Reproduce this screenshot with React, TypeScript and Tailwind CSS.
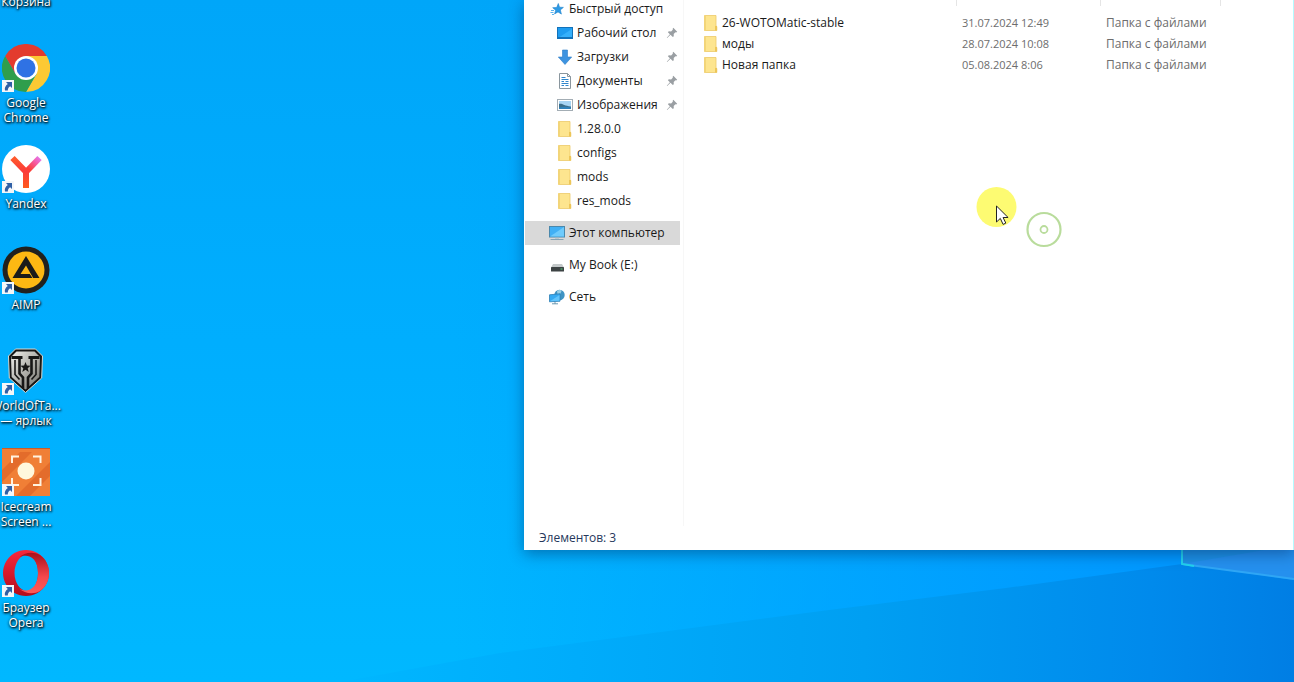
import type { ReactNode } from 'react'

type NavIcon = 'star' | 'desktop' | 'download' | 'document' | 'picture' | 'folder' | 'pc' | 'drive' | 'network'

type NavItem = { label: string; icon: NavIcon; pinned?: boolean }

const QUICK_ACCESS: NavItem[] = [
  { label: 'Рабочий стол', icon: 'desktop', pinned: true },
  { label: 'Загрузки', icon: 'download', pinned: true },
  { label: 'Документы', icon: 'document', pinned: true },
  { label: 'Изображения', icon: 'picture', pinned: true },
  { label: '1.28.0.0', icon: 'folder' },
  { label: 'configs', icon: 'folder' },
  { label: 'mods', icon: 'folder' },
  { label: 'res_mods', icon: 'folder' },
]

const FILES = [
  { name: '26-WOTOMatic-stable', date: '31.07.2024 12:49', type: 'Папка с файлами' },
  { name: 'моды', date: '28.07.2024 10:08', type: 'Папка с файлами' },
  { name: 'Новая папка', date: '05.08.2024 8:06', type: 'Папка с файлами' },
]

// ---------- Icons ----------

function Folder() {
  return (
    <svg viewBox="0 0 16 16" className="h-4 w-4 shrink-0" aria-hidden="true">
      <path d="M1.500 .5h11.500V11l.8.5v4H1.500z" fill="#fde58f" stroke="#ecc968" strokeWidth=".8" />
      <path d="M1.500 .5H3v15H1.500z" fill="#f3d678" />
      <path d="M12 11h2v4.500h-2z" fill="#edc659" />
    </svg>
  )
}

function NavGlyph({ icon }: { icon: NavIcon }) {
  if (icon === 'folder') return <Folder />
  return (
    <svg viewBox="0 0 16 16" className="h-4 w-4 shrink-0" aria-hidden="true">
      {icon === 'star' && (
        <>
          <path d="M9.300 2.500l1.200 3.700 3.900.2-3.100 2.500 1.100 4.200-3.400-2.200-3.400 2 1.100-3.700-3-2.500 4-.2z" fill="#2e9be6" stroke="#1b7fc9" strokeWidth=".6" />
          <path d="M2 9.500h3M1.500 11.500h3M3 13.500h2" stroke="#5cb4ee" />
        </>
      )}
      {icon === 'desktop' && (
        <>
          <rect x=".5" y="2.500" width="15" height="11" fill="#1e9cf0" stroke="#1272ba" />
          <path d="M1 13L15 4v9z" fill="#35b0fb" />
          <path d="M1 12.500h14" stroke="#1272ba" />
        </>
      )}
      {icon === 'download' && (
        <path d="M5.500 1h5v7h4.200L8 15.500 1.300 8h4.200z" fill="#3d93e0" stroke="#2d7dc8" strokeWidth=".6" />
      )}
      {icon === 'document' && (
        <>
          <path d="M2.500.5h8l3 3v12h-11z" fill="#fff" stroke="#8a969e" />
          <path d="M10.500.5v3h3" fill="none" stroke="#8a969e" />
          <path d="M4.500 4.500h4M4.500 6.500h7M4.500 8.500h2.500M8.500 8.500h3M4.500 10.500h7M4.500 12.500h2.500M8.500 12.500h3" stroke="#2f86cc" />
        </>
      )}
      {icon === 'picture' && (
        <>
          <rect x=".5" y="2.500" width="15" height="11" fill="#fff" stroke="#a3adb4" />
          <rect x="2" y="4" width="12" height="8" fill="#a8d5f4" />
          <path d="M2 7c3-1 5 2 12 2.500V12H2z" fill="#3c6f8b" />
          <path d="M2 10.500c4-1 8-.8 12 0V12H2z" fill="#2f82bb" />
        </>
      )}
      {icon === 'pc' && (
        <>
          <rect x=".5" y="1.500" width="15" height="10.500" fill="#41b0f5" stroke="#4a88ac" />
          <path d="M1 11.500L15 2v9.500z" fill="#6fcbfc" />
          <path d="M6 12.500h4v1H6z" fill="#9fb6c2" />
          <path d="M1.500 14.500h13" stroke="#86a3b3" />
        </>
      )}
      {icon === 'drive' && (
        <>
          <path d="M4 7h9l2 3.500H2z" fill="#c4c9ca" />
          <rect x="2" y="10" width="13" height="4.500" rx=".6" fill="#3d4344" />
          <rect x="11.500" y="11.500" width="2" height="1" fill="#55d07b" />
        </>
      )}
      {icon === 'network' && (
        <>
          <circle cx="10.500" cy="6" r="5.200" fill="#3f94c4" />
          <path d="M8 2c2-1.500 4-1 4.500 0l-1 2.500-3 1z" fill="#9bcfe6" />
          <path d="M.5 5.800l10.500-1v7.400l-10.500.6z" fill="#35aaf2" stroke="#2f7fb4" strokeWidth=".8" />
          <path d="M1 12.300L10.500 6v5.800z" fill="#62c4fb" />
          <path d="M3 14.800h6M6 13v2" stroke="#6d9ab3" />
        </>
      )}
    </svg>
  )
}

function Pin() {
  return (
    <svg viewBox="0 0 12 12" className="h-3 w-3 shrink-0" aria-hidden="true">
      <path d="M7.300.8l3.900 3.900-1 .7-.8-.1-1.700 1.700.1 2.200-1 .9-2.300-2.300L1.200 11l-.4-.3 3.100-3.500-2-2 .9-.9 2.300.1 1.700-1.700-.1-.9z" fill="#9a9fa3" />
    </svg>
  )
}

function ShortcutArrow() {
  return (
    <svg viewBox="0 0 12 12" className="absolute bottom-0 left-0 h-3 w-3" aria-hidden="true">
      <rect width="12" height="12" fill="#f4f6f8" />
      <path d="M4 2h6v6L8.200 6.200C6.500 7.200 5.800 8.500 5.800 10.500H3C2.300 8 3.500 5.500 5.800 3.900z" fill="#2f5fa5" />
    </svg>
  )
}

function ChromeIcon() {
  return (
    <svg viewBox="0 0 48 48" className="h-12 w-12">
      <path d="M24 12h20.800A24 24 0 0 1 24 48l10.400-18z" fill="#fcc934" />
      <path d="M3.200 12L13.600 30 24 36l10.400-6L24 48A24 24 0 0 1 3.200 12z" fill="#2f9e4c" />
      <path d="M3.200 12A24 24 0 0 1 44.800 12H24L13.600 30z" fill="#e33b2e" />
      <circle cx="24" cy="24" r="12" fill="#fff" />
      <circle cx="24" cy="24" r="9.500" fill="#2f72e4" />
    </svg>
  )
}

function YandexIcon() {
  return (
    <svg viewBox="0 0 48 48" className="h-12 w-12">
      <defs>
        <linearGradient id="ya-arm" gradientUnits="userSpaceOnUse" x1="24" y1="27" x2="38" y2="12">
          <stop offset="0.200" stopColor="#fb3d35" />
          <stop offset="0.700" stopColor="#f45fb0" />
          <stop offset="1" stopColor="#e07af0" />
        </linearGradient>
        <linearGradient id="ya-stem" x1="0" y1="0" x2="0" y2="1">
          <stop offset="0" stopColor="#ff5a2c" />
          <stop offset="0.450" stopColor="#fb3a3a" />
          <stop offset="1" stopColor="#ff5a1c" />
        </linearGradient>
      </defs>
      <circle cx="24" cy="24" r="24" fill="#fff" />
      <path d="M24 27L37.500 13" stroke="url(#ya-arm)" strokeWidth="6" />
      <path d="M10.500 13L24 27v16" fill="none" stroke="url(#ya-stem)" strokeWidth="6" />
    </svg>
  )
}

function AimpIcon() {
  return (
    <svg viewBox="0 0 48 48" className="h-12 w-12">
      <circle cx="24" cy="24" r="23.500" fill="#20211f" />
      <circle cx="24" cy="24" r="18.500" fill="#fdb813" />
      <path d="M24 10L37.500 32h-6.300L24 19.500 18.500 28h9.300l2.600 4H10.500z" fill="#1c1c1a" />
    </svg>
  )
}

function TanksIcon() {
  return (
    <svg viewBox="0 0 48 48" className="h-12 w-12">
      <defs>
        <linearGradient id="wot-steel" x1="0" y1="0" x2="1" y2="1">
          <stop offset="0" stopColor="#f0f0ec" />
          <stop offset="0.500" stopColor="#b2b2ac" />
          <stop offset="1" stopColor="#73736d" />
        </linearGradient>
      </defs>
      <path d="M13.500 2h20l7 7-.8 22L23.500 45.500 7.300 31 6.500 9z" fill="#171716" stroke="#d8d8d2" strokeWidth="1" />
      <path d="M14.500 4.500h18l5.500 5.500-.7 20L23.500 42.500 9.700 30 9 10z" fill="url(#wot-steel)" />
      {/* Twin T bars */}
      <path d="M9.500 10.500h11M26.500 10.500h11" stroke="#171716" strokeWidth="3" />
      <path d="M17.500 11v15.500l3.500 4V41M29.500 11v15.500l-3.500 4V41" fill="none" stroke="#171716" strokeWidth="2.600" />
      <path d="M13 13v14.500l4.500 5" fill="none" stroke="#171716" strokeWidth="1.600" />
      <path d="M34 13v14.500l-4.500 5" fill="none" stroke="#171716" strokeWidth="1.600" />
      <path d="M23.500 15l1.400 3.600 3.600.2-2.800 2.400 1 3.700-3.200-2.100-3.200 2.100 1-3.700-2.800-2.400 3.600-.2z" fill="#171716" />
    </svg>
  )
}

function IcecreamIcon() {
  return (
    <svg viewBox="0 0 48 48" className="h-12 w-12">
      <rect width="48" height="48" fill="#f07f36" />
      <path d="M0 22L18 4h12L0 34zM14 48L48 14v14L28 48z" fill="#e36c2b" />
      <path d="M0 0h48" stroke="#c95d28" strokeWidth="2" />
      <path d="M10 15V8.500h7M31 8.500h7.500V15M38.500 30v7H31M17 37h-7v-7" fill="none" stroke="#fff3df" strokeWidth="2" />
      <circle cx="24" cy="23" r="8.500" fill="#fff8dc" />
    </svg>
  )
}

function OperaIcon() {
  return (
    <svg viewBox="0 0 48 48" className="h-12 w-12">
      <defs>
        <linearGradient id="op-left" x1="0" y1="0" x2="0" y2="1">
          <stop offset="0" stopColor="#f8283c" />
          <stop offset="1" stopColor="#b30c1b" />
        </linearGradient>
        <linearGradient id="op-right" x1="0" y1="0" x2="0" y2="1">
          <stop offset="0" stopColor="#a80f1c" />
          <stop offset="0.600" stopColor="#f5484c" />
          <stop offset="1" stopColor="#ff5a58" />
        </linearGradient>
      </defs>
      <path fillRule="evenodd" d="M24 1a23 23 0 1 0 .01 0zM25 5.500c6.500 0 11 8 11 18.500s-4.500 18-11 18-12.500-8-12.500-18S18.500 5.500 25 5.500z" fill="url(#op-left)" />
      <path d="M17 8.500C22 3.500 31 2 38 6c6 4 9 11 9 18s-3 14-9 18c-6 3.500-15 3-21-2.500 8 5 19 .5 19-15.500S25 4 17 8.500z" fill="url(#op-right)" />
    </svg>
  )
}

// ---------- Desktop ----------

const SHORTCUTS: { lines: string[]; icon: ReactNode }[] = [
  { lines: ['Корзина'], icon: null },
  { lines: ['Google', 'Chrome'], icon: <ChromeIcon /> },
  { lines: ['Yandex'], icon: <YandexIcon /> },
  { lines: ['AIMP'], icon: <AimpIcon /> },
  { lines: ['WorldOfTa...', '— ярлык'], icon: <TanksIcon /> },
  { lines: ['Icecream', 'Screen ...'], icon: <IcecreamIcon /> },
  { lines: ['Браузер', 'Opera'], icon: <OperaIcon /> },
]

function Wallpaper() {
  return (
    <svg viewBox="0 0 1294 682" preserveAspectRatio="none" className="absolute inset-0 h-full w-full" aria-hidden="true">
      <defs>
        <linearGradient id="sky" x1="0" y1="0" x2="0" y2="1">
          <stop offset="0" stopColor="#00a6f9" />
          <stop offset="0.500" stopColor="#00aefe" />
          <stop offset="1" stopColor="#00b8ff" />
        </linearGradient>
        <linearGradient id="shade" x1="0" y1="0" x2="1" y2="0">
          <stop offset="0.350" stopColor="#0098ff" stopOpacity="0" />
          <stop offset="0.900" stopColor="#0098ff" />
        </linearGradient>
        <linearGradient id="floor" gradientUnits="userSpaceOnUse" x1="340" y1="640" x2="1294" y2="660">
          <stop offset="0" stopColor="#00b7ff" />
          <stop offset="0.250" stopColor="#00acfb" />
          <stop offset="0.550" stopColor="#009ff2" />
          <stop offset="0.850" stopColor="#008aec" />
          <stop offset="1" stopColor="#007ee4" />
        </linearGradient>
      </defs>
      <rect width="1294" height="682" fill="url(#sky)" />
      <rect width="1294" height="682" fill="url(#shade)" />
      <path d="M340 682L500 653 829 610 1006 588 1182 564 1294 580V682z" fill="url(#floor)" />
      <path d="M1182 500V564L1294 579V500z" fill="#1d90e4" />
      <path d="M1182 564L1294 545v34z" fill="#2590ee" />
      <path d="M1182 564L1294 579" stroke="#2fa6f5" strokeWidth="2" />
      <path d="M1182 500V564l12 2" fill="none" stroke="#22d3ee" strokeWidth="2" />
    </svg>
  )
}

function DesktopIcons() {
  return (
    <ul className="relative -mt-[57px] -ml-[11px] w-[535px] shrink-0">
      {SHORTCUTS.map((item) => (
        <li key={item.lines[0]} className="h-[101px] w-[74px]">
          <a href="#" className="flex flex-col items-center gap-[3px]">
            <span className="relative h-12 w-12" aria-hidden="true">
              {item.icon}
              {item.icon && <ShortcutArrow />}
            </span>
            <span className="text-center text-xs leading-[15px] whitespace-nowrap text-white [text-shadow:1px_1px_2px_#000,0_1px_3px_#000]">
              {item.lines.map((line) => (
                <span key={line} className="block">
                  {line}
                </span>
              ))}
            </span>
          </a>
        </li>
      ))}
    </ul>
  )
}

// ---------- Explorer window ----------

function NavRow({ item, nested, selected }: { item: NavItem; nested?: boolean; selected?: boolean }) {
  return (
    <a
      href="#"
      aria-current={selected ? 'page' : undefined}
      className={[
        'flex h-6 items-center gap-1 pr-[2px] whitespace-nowrap',
        nested ? 'pl-8' : 'pl-6',
        selected ? 'bg-[#d9d9d9]' : '',
      ].join(' ')}
    >
      <NavGlyph icon={item.icon} />
      <span className="flex-1">{item.label}</span>
      {item.pinned && <Pin />}
    </a>
  )
}

function Sidebar() {
  return (
    <nav aria-label="Область навигации" className="-mt-[3px] flex w-[159px] shrink-0 flex-col gap-2 border-r border-[#f7f7f7] pr-[3px]">
      <div>
        <NavRow item={{ label: 'Быстрый доступ', icon: 'star' }} />
        {QUICK_ACCESS.map((item) => (
          <NavRow key={item.label} item={item} nested />
        ))}
      </div>
      <NavRow item={{ label: 'Этот компьютер', icon: 'pc' }} selected />
      <NavRow item={{ label: 'My Book (E:)', icon: 'drive' }} />
      <NavRow item={{ label: 'Сеть', icon: 'network' }} />
    </nav>
  )
}

function FileTable() {
  return (
    <div className="min-w-0 flex-1">
      <table className="-mt-[18px] w-full table-fixed text-left text-[#6d6d6d]">
        <thead>
          <tr className="h-6 leading-4">
            <th className="w-[272px] border-r border-[#e5e5e5] p-0 pb-[2px] pl-[19px] font-normal">Имя</th>
            <th className="w-36 border-r border-[#e5e5e5] p-0 pb-[2px] pl-[6px] font-normal">Дата изменения</th>
            <th className="w-[120px] border-r border-[#e5e5e5] p-0 pb-[2px] pl-[6px] font-normal">Тип</th>
            <th className="p-0 pb-[2px] pl-[6px] font-normal">Размер</th>
          </tr>
        </thead>
        <tbody className="before:block before:h-[6px]">
          {FILES.map((file) => (
            <tr key={file.name} className="h-[21px] leading-4">
              <td className="p-0 pl-[19px] text-[#1a1a1a]">
                <span className="flex items-center gap-[3px]">
                  <Folder />
                  {file.name}
                </span>
              </td>
              <td className="p-0 pl-[6px] text-[11px]">{file.date}</td>
              <td className="p-0 pl-[6px]">{file.type}</td>
              <td />
            </tr>
          ))}
        </tbody>
      </table>
    </div>
  )
}

export default function App() {
  return (
    <main className="relative flex h-screen overflow-hidden bg-[#00adff] font-['Open_Sans','Noto_Sans',sans-serif] text-xs">
      <Wallpaper />
      <DesktopIcons />

      <section
        aria-label="Проводник"
        className="relative mb-[132px] flex min-w-0 flex-1 flex-col border-r border-r-[#b4fbff] bg-white pl-px text-[#1a1a1a] shadow-[0_4px_14px_rgba(0,40,90,0.45)]"
      >
        <div className="flex min-h-0 flex-1">
          <Sidebar />
          <FileTable />
        </div>
        <footer className="flex h-6 items-center pl-[14px] text-[#26385c]">Элементов: 3</footer>
      </section>

      {/* Cursor highlight and the fading click ring */}
      <svg viewBox="0 0 90 66" className="pointer-events-none absolute top-[184px] left-[974px] h-[66px] w-[90px]" aria-hidden="true">
        <circle cx="22.500" cy="23" r="20" fill="#fdfb72" />
        <path d="M22.500 22v16l3.800-3.600 2.800 6 2.700-1.300-2.700-5.600h5z" fill="#fff" stroke="#222" />
        <circle cx="70" cy="45.500" r="16.500" fill="none" stroke="#b9dc9c" strokeWidth="2.200" />
        <circle cx="70" cy="45.500" r="3.500" fill="none" stroke="#b9dc9c" strokeWidth="1.800" />
      </svg>
    </main>
  )
}
